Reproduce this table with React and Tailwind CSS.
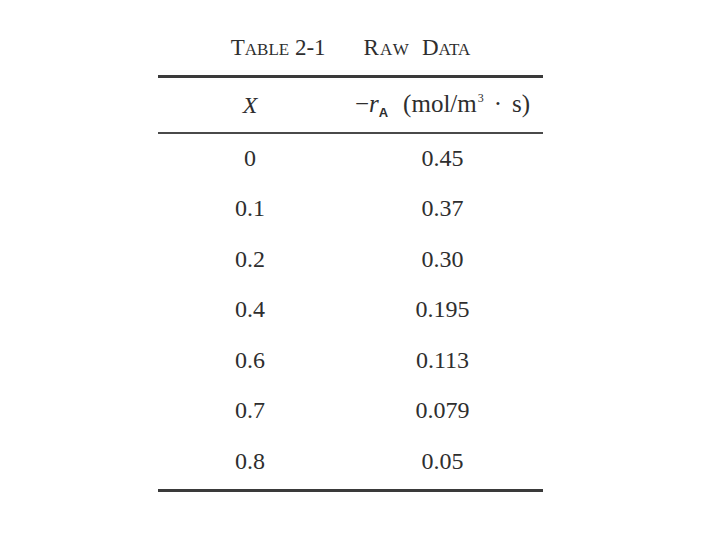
import React from "react";

const ROWS = [
  ["0", "0.45"],
  ["0.1", "0.37"],
  ["0.2", "0.30"],
  ["0.4", "0.195"],
  ["0.6", "0.113"],
  ["0.7", "0.079"],
  ["0.8", "0.05"],
];

function SmallCaps({ big, small, className = "" }) {
  return (
    <span className={className}>
      <span className="text-[23px]">{big}</span>
      <span className="text-[17px]">{small}</span>
    </span>
  );
}

export default function App() {
  return (
    <div
      className="w-[720px] h-[540px] bg-white text-[#2e2e2e] pl-[158px] pt-[26px]"
      style={{ fontFamily: '"Liberation Serif", "Times New Roman", serif' }}
    >
      <div className="w-[385px]">
        <div className="h-[36px] flex items-baseline justify-center pt-[10px] leading-none">
          <span className="mr-[38px]">
            <SmallCaps big="T" small="ABLE" />
            <span className="text-[23px]"> 2-1</span>
          </span>
          <span className="text-[23px]">R</span>
          <span className="text-[17px] tracking-[2px] ml-[1px]">AW</span>
          <span className="w-[11px]" />
          <SmallCaps big="D" small="ATA" />
        </div>
        <div className="mt-[13px] h-[3px] bg-[#3a3a3a]" />
        <div className="grid grid-cols-[184px_201px] h-[54px] items-center text-[25px] leading-none">
          <span className="text-center italic text-[24px]">X</span>
          <span className="text-center whitespace-nowrap">
            −<span className="italic">r</span>
            <span className="text-[13px] font-bold align-[-5px] mr-[15px]" style={{ fontFamily: '"Liberation Sans", Arial, sans-serif' }}>A</span>
            (mol/m<span className="text-[12px] align-[10px] ml-[1px]">3</span>
            <span className="mx-[10px]">·</span>s)
          </span>
        </div>
        <div className="h-[2px] bg-[#4a4a4a]" />
        <div className="pb-[1px]">
          {ROWS.map(([x, r]) => (
            <div key={x} className="grid grid-cols-[184px_201px] h-[50.5px] items-center text-[24px] leading-none pb-[3px]">
              <span className="text-center">{x}</span>
              <span className="text-center">{r}</span>
            </div>
          ))}
        </div>
        <div className="h-[3px] bg-[#3a3a3a]" />
      </div>
    </div>
  );
}
